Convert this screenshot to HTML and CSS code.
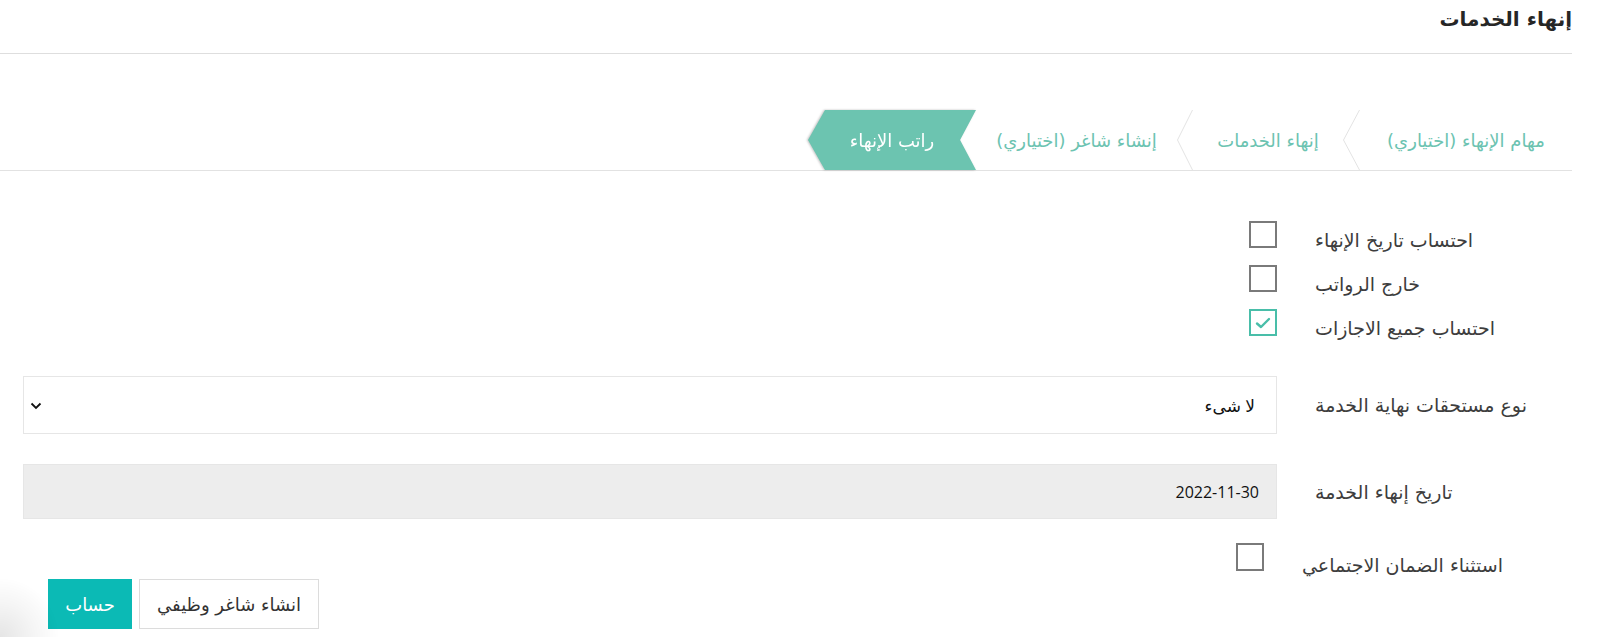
FILE: index.html
```html
<!DOCTYPE html>
<html lang="ar" dir="rtl">
<head>
<meta charset="utf-8">
<title>إنهاء الخدمات</title>
<link rel="stylesheet" href="styles.css">
</head>
<body>
<div class="page">
  <header class="title-bar">
    <h1 class="title">إنهاء الخدمات</h1>
  </header>

  <nav class="steps">
    <div class="step step-1">مهام الإنهاء (اختياري)</div>
    <svg class="sep" width="17" height="60" viewBox="0 0 17 60"><polyline points="16.5,0 0.5,30 16.5,60" fill="none" stroke="#e3e3e3" stroke-width="1"/></svg>
    <div class="step step-2">إنهاء الخدمات</div>
    <svg class="sep" width="16" height="60" viewBox="0 0 16 60"><polyline points="15.5,0 0.5,30 15.5,60" fill="none" stroke="#e3e3e3" stroke-width="1"/></svg>
    <div class="step step-3">إنشاء شاغر (اختياري)</div>
    <div class="active-wrap"><div class="step step-active">راتب الإنهاء</div></div>
  </nav>

  <form class="form">
    <div class="row row-check row-first">
      <label class="label">احتساب تاريخ الإنهاء</label>
      <div class="control"><span class="box"></span></div>
    </div>
    <div class="row row-check">
      <label class="label">خارج الرواتب</label>
      <div class="control"><span class="box"></span></div>
    </div>
    <div class="row row-check">
      <label class="label">احتساب جميع الاجازات</label>
      <div class="control"><span class="box box-checked"><svg width="16" height="12" viewBox="0 0 16 12"><polyline points="2,6.5 6,10 14,2" fill="none" stroke="#49bea9" stroke-width="2.4" stroke-linecap="round" stroke-linejoin="round"/></svg></span></div>
    </div>
    <div class="row row-select">
      <label class="label">نوع مستحقات نهاية الخدمة</label>
      <div class="control">
        <div class="select">
          <span class="select-value">لا شىء</span>
          <svg class="chev" width="12" height="8" viewBox="0 0 12 8"><polyline points="1.5,1.5 6,6 10.5,1.5" fill="none" stroke="#111" stroke-width="1.8"/></svg>
        </div>
      </div>
    </div>
    <div class="row row-date">
      <label class="label">تاريخ إنهاء الخدمة</label>
      <div class="control">
        <div class="date">2022-11-30</div>
      </div>
    </div>
    <div class="row row-check row-last">
      <label class="label label-last">استثناء الضمان الاجتماعي</label>
      <div class="control"><span class="box box-last"></span></div>
    </div>
    <div class="actions">
      <button type="button" class="btn btn-outline">انشاء شاغر وظيفي</button>
      <button type="button" class="btn btn-primary">حساب</button>
    </div>
  </form>
</div>
<div class="corner-shade"></div>
</body>
</html>
```

FILE: styles.css
```css
* { box-sizing: border-box; }

html, body {
  margin: 0;
  padding: 0;
  background: #ffffff;
}

body {
  font-family: "DejaVu Sans", "Open Sans", sans-serif;
  color: #333;
  width: 1618px;
  height: 637px;
  overflow: hidden;
}

.page {
  width: 1572px;
  margin-left: auto;
  margin-right: 46px;
}

.title-bar {
  height: 54px;
  border-bottom: 1px solid #dedede;
  display: flex;
  align-items: flex-start;
}

.title {
  margin: 6px 0 0 0;
  font-size: 20px;
  font-weight: bold;
  color: #262626;
  line-height: 26px;
}

.steps {
  margin-top: 56px;
  height: 61px;
  border-bottom: 1px solid #e2e2e2;
  display: flex;
  align-items: stretch;
}

.step {
  height: 60px;
  display: flex;
  align-items: center;
  justify-content: center;
  font-size: 18px;
  color: #6cc3b1;
  white-space: nowrap;
}

.step-1 { width: 212px; }
.step-2 { width: 150px; }
.step-3 { width: 201px; }

.sep { display: block; flex: none; }

.active-wrap {
  filter: drop-shadow(-1px 0 1px rgba(0,0,0,0.25));
}

.step-active {
  width: 168px;
  background: #6cc4b0;
  color: #fff;
  clip-path: polygon(100% 0, 10.1% 0, 0 50%, 10.1% 100%, 100% 100%, 90.5% 50%);
}

.form {
  padding-left: 23px;
  padding-top: 50px;
}

.row {
  display: grid;
  grid-template-columns: 282px 1fr;
  column-gap: 13px;
  align-items: center;
}

.label {
  text-align: left;
  padding-left: 25px;
  font-size: 19px;
  line-height: 24px;
  color: #3d3d3d;
  white-space: nowrap;
}

.control {
  display: flex;
  align-items: center;
}

.row-check {
  height: 27px;
  grid-template-rows: 27px;
  margin-bottom: 17px;
}
.row-check .label { padding-top: 10px; }

.box {
  display: inline-flex;
  align-items: center;
  justify-content: center;
  width: 28px;
  height: 27px;
  border: 2px solid #7a7a7a;
  background: #fff;
}

.box-checked { border-color: #49bea9; }

.row-select { margin-top: 40px; height: 58px; }

.select {
  width: 100%;
  height: 58px;
  border: 1px solid #e6e6e6;
  background: #fff;
  display: flex;
  align-items: center;
  justify-content: space-between;
  padding: 0 21px 0 6px;
  font-family: "Open Sans", "DejaVu Sans", sans-serif;
  font-size: 17px;
  color: #111;
}

.chev { display: block; margin-top: 2px; }

.row-date { margin-top: 30px; height: 55px; }

.date {
  width: 100%;
  height: 55px;
  background: #ededed;
  border: 1px solid #e6e6e6;
  display: flex;
  align-items: center;
  padding: 0 17px;
  font-family: "Open Sans", "DejaVu Sans", sans-serif;
  font-size: 16px;
  color: #111;
}

.row-last {
  margin-top: 24px;
  margin-bottom: 0;
  height: 28px;
  grid-template-rows: 28px;
}
.row-last .label { padding-left: 12px; padding-top: 16px; }

.box-last { margin-right: 13px; height: 28px; }

.actions {
  display: flex;
  justify-content: flex-end;
  gap: 7px;
  padding-left: 25px;
  margin-top: 8px;
}

.btn {
  height: 50px;
  font-family: "DejaVu Sans", sans-serif;
  font-size: 18px;
  cursor: pointer;
}

.btn-outline {
  width: 180px;
  background: #fff;
  border: 1px solid #dcdcdc;
  color: #333;
}

.btn-primary {
  width: 84px;
  background: #0bbab5;
  border: none;
  color: #fff;
}

.corner-shade {
  position: fixed;
  left: 0;
  bottom: 0;
  width: 60px;
  height: 60px;
  background: radial-gradient(circle at 0 100%, rgba(0,0,0,0.10) 0, rgba(0,0,0,0.04) 40%, rgba(0,0,0,0) 70%);
  pointer-events: none;
}
```
